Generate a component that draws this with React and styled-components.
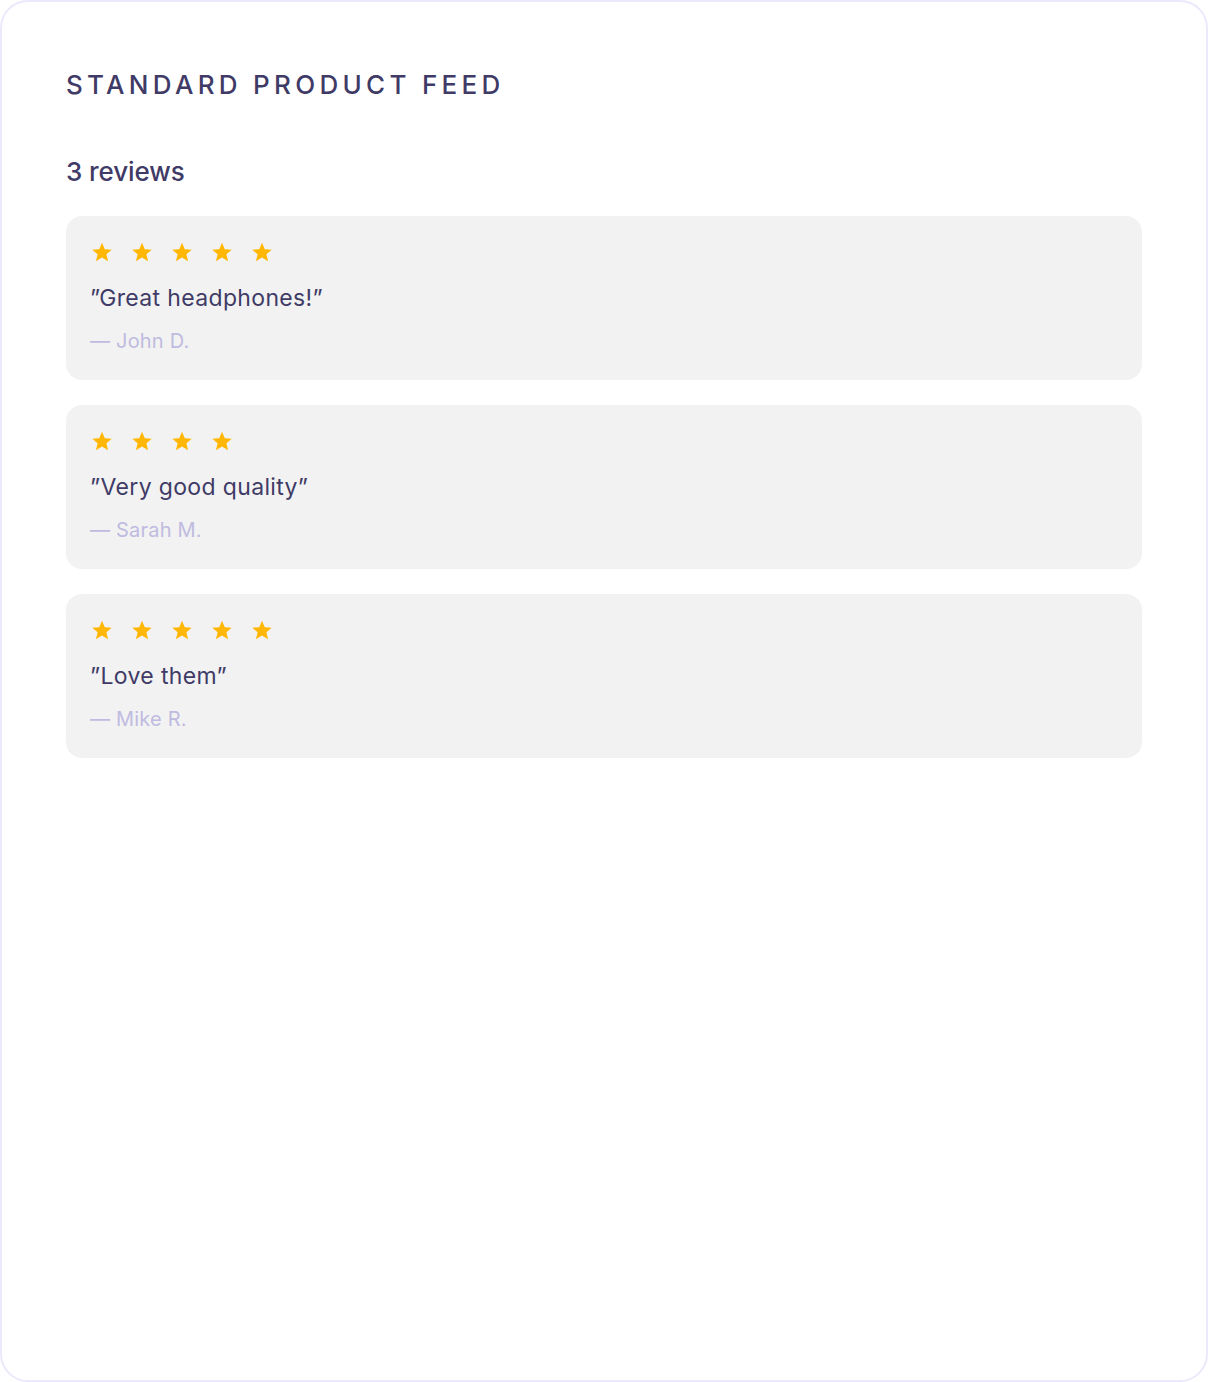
import styled, { createGlobalStyle } from "styled-components";

const GlobalStyle = createGlobalStyle`
  * { box-sizing: border-box; }
  body {
    margin: 0;
    background: #fff;
    font-family: Inter, "Open Sans", sans-serif;
  }
`;

const Frame = styled.div`
  width: 1208px;
  height: 1382px;
  border: 2px solid #ebe9fb;
  border-radius: 28px;
  padding: 64px 64px;
  background: #fff;
`;

const Title = styled.h1`
  margin: 0;
  font-size: 26px;
  font-weight: 500;
  line-height: 38px;
  letter-spacing: 4.3px;
  color: #3f3b66;
`;

const Count = styled.h2`
  margin: 48px 0 0;
  font-size: 26px;
  font-weight: 500;
  line-height: 40px;
  color: #3f3b66;
  letter-spacing: -0.1px;
`;

const List = styled.div`
  display: flex;
  flex-direction: column;
  gap: 25px;
  margin-top: 24px;
  width: 1076px;
`;

const Card = styled.div`
  background: #f2f2f2;
  border-radius: 16px;
  padding: 22px 24px 26px;
  height: 164px;
`;

const Stars = styled.div`
  display: flex;
  gap: 18px;
  height: 28px;
  margin-left: 1px;
  align-items: center;
`;

const Star = styled.svg`
  width: 22px;
  height: 22px;
  fill: #ffb703;
`;

const Quote = styled.p`
  margin: 17px 0 0;
  font-size: 23px;
  line-height: 30px;
  color: #3f3b66;
  letter-spacing: 0.35px;
`;

const Author = styled.p`
  margin: 14px 0 0;
  font-size: 20px;
  line-height: 28px;
  color: #bfbbe0;
  letter-spacing: 0.2px;
`;

const reviews = [
  { rating: 5, text: "\u201dGreat headphones!\u201d", author: "John D." },
  { rating: 4, text: "\u201dVery good quality\u201d", author: "Sarah M." },
  { rating: 5, text: "\u201dLove them\u201d", author: "Mike R." },
];

function StarIcon() {
  return (
    <Star viewBox="0 0 24 24">
      <path d="M12 1.8l3 7.1 7.6.6-5.8 5 1.8 7.5L12 18l-6.6 4 1.8-7.5-5.8-5 7.6-.6z" />
    </Star>
  );
}

export default function App() {
  return (
    <>
      <GlobalStyle />
      <Frame>
        <Title>STANDARD PRODUCT FEED</Title>
        <Count>3 reviews</Count>
        <List>
          {reviews.map((r) => (
            <Card key={r.author}>
              <Stars>
                {Array.from({ length: r.rating }).map((_, i) => (
                  <StarIcon key={i} />
                ))}
              </Stars>
              <Quote>{r.text}</Quote>
              <Author>— {r.author}</Author>
            </Card>
          ))}
        </List>
      </Frame>
    </>
  );
}
